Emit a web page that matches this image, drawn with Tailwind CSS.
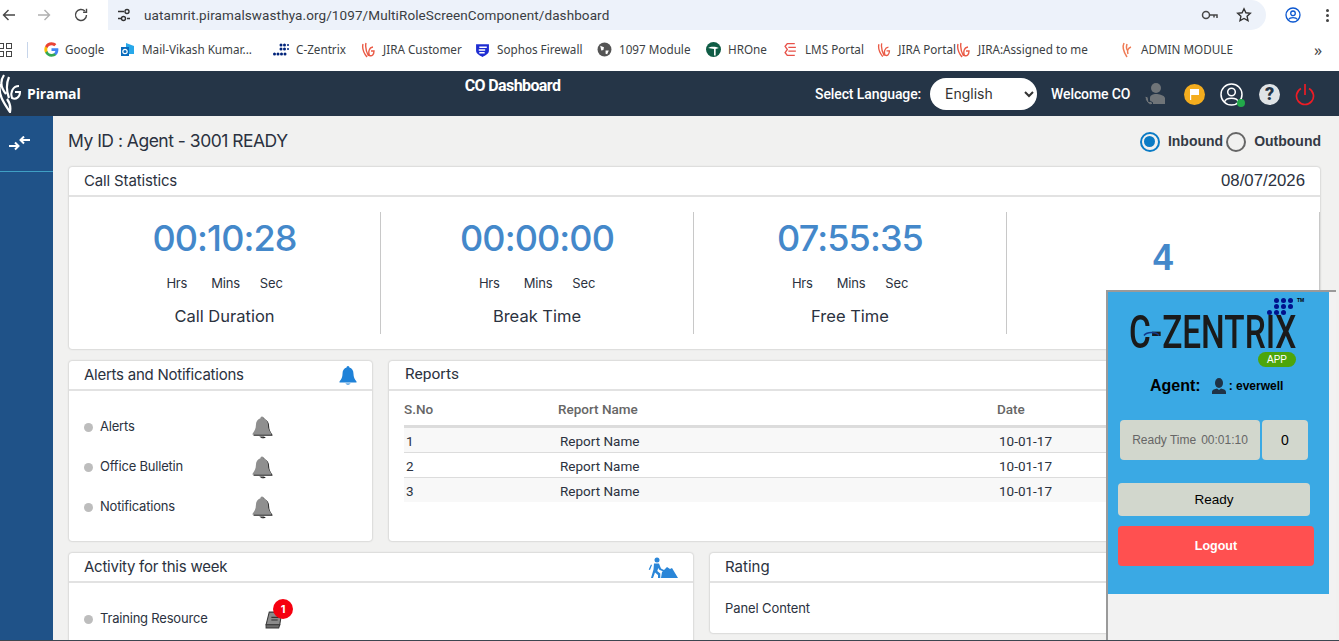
<!DOCTYPE html>
<html lang="en">
<head>
<meta charset="UTF-8" />
<title>CO Dashboard</title>
<script src="https://cdn.jsdelivr.net/npm/@tailwindcss/browser@4"></script>
</head>
<body class="w-[1339px] h-[641px] overflow-hidden relative bg-white font-['Inter',sans-serif] text-[#2b3240]">

  <!-- browser toolbar -->
  <div class="h-[30px] flex items-center bg-white relative">
    <svg class="w-4 h-4 ml-[1px] text-[#474747]" viewBox="0 0 16 16" fill="none" stroke="currentColor" stroke-width="1.4"><path d="M14 8H2.5M7.5 3 2.5 8l5 5"/></svg>
    <svg class="w-4 h-4 ml-[19px] text-[#b0b0b0]" viewBox="0 0 16 16" fill="none" stroke="currentColor" stroke-width="1.4"><path d="M2 8h11.500M8.500 3l5 5-5 5"/></svg>
    <svg class="w-4 h-4 ml-[21px] text-[#474747]" viewBox="0 0 16 16" fill="none" stroke="currentColor" stroke-width="1.4"><path d="M13.500 8a5.500 5.500 0 1 1-1.600-3.900"/><path d="M13.500 1.800v3.400h-3.400" /></svg>
    <div class="ml-[19px] w-[1158px] h-[30px] bg-[#edf2fa] rounded-r-full rounded-bl-[15px] flex items-center pr-[14px]">
      <svg class="w-4 h-4 ml-[8px] text-[#333]" viewBox="0 0 16 16" fill="none" stroke="currentColor" stroke-width="1.400"><path d="M2 4.500h6M2 11.500h3M11 11.500h3"/><circle cx="11" cy="4.500" r="2"/><circle cx="7.500" cy="11.500" r="2"/></svg>
      <span class="ml-[12px] text-[13.500px] font-['Roboto',sans-serif] text-[#3a3d42] tracking-[0.1px] flex-1">uatamrit.piramalswasthya.org/1097/MultiRoleScreenComponent/dashboard</span>
      <svg class="w-[18px] h-[12px] text-[#474747] mr-[17px]" viewBox="0 0 18 12" fill="none" stroke="currentColor" stroke-width="1.500"><circle cx="5" cy="6" r="3.500"/><path d="M8.500 6H16v3M13 6v2.500"/></svg>
      <svg class="w-[16px] h-[16px] text-[#333]" viewBox="0 0 16 16" fill="none" stroke="currentColor" stroke-width="1.400"><path d="m8 1.800 1.900 4 4.400.5-3.200 3 .9 4.400L8 11.500l-4 2.200.9-4.400-3.200-3 4.400-.5z"/></svg>
    </div>
    <svg class="w-[16px] h-[16px] ml-[19px] text-[#0b57d0]" viewBox="0 0 16 16" fill="none" stroke="currentColor" stroke-width="1.300"><circle cx="8" cy="8" r="7"/><circle cx="8" cy="6.300" r="2.300"/><path d="M3.500 12.500c1.500-2.500 7.500-2.500 9 0"/></svg>
    <div class="ml-[25px] flex flex-col gap-[2px]"><i class="w-[3px] h-[3px] rounded-full bg-[#444]"></i><i class="w-[3px] h-[3px] rounded-full bg-[#444]"></i><i class="w-[3px] h-[3px] rounded-full bg-[#444]"></i></div>
  </div>

  <!-- bookmarks -->
  <div class="h-[41px] flex items-center bg-white text-[11.700px] font-['Noto_Sans',sans-serif] text-[#3c3f44] whitespace-nowrap pb-[1px]">
    <div class="w-[27px] shrink-0 flex"><div class="grid grid-cols-2 gap-[2px] -ml-[2px] w-[14px]"><i class="h-[6px] border border-[#444]"></i><i class="h-[6px] border border-[#444]"></i><i class="h-[6px] border border-[#444]"></i><i class="h-[6px] border border-[#444]"></i></div></div>
    <div class="w-[1px] h-[16px] bg-[#c7d5ea] mr-[16px]"></div>
    <div class="w-[76px] flex items-center gap-[6px]">
      <svg class="w-[15px] h-[15px]" viewBox="0 0 48 48"><path fill="#4285F4" d="M46 24.500c0-1.600-.1-3.100-.4-4.500H24v9h12.400c-.5 2.800-2.100 5.200-4.500 6.800v5.700h7.300C43.500 37.500 46 31.500 46 24.500z"/><path fill="#34A853" d="M24 47c6.200 0 11.400-2 15.200-5.500l-7.300-5.700c-2 1.400-4.700 2.200-7.900 2.200-6 0-11.100-4-12.900-9.500H3.500v5.900C7.300 41.900 15 47 24 47z"/><path fill="#FBBC05" d="M11.100 28.500c-.5-1.400-.7-2.900-.7-4.500s.3-3.100.7-4.500v-5.900H3.500C2 16.700 1 20.200 1 24s1 7.300 2.500 10.400z"/><path fill="#EA4335" d="M24 10c3.400 0 6.400 1.200 8.800 3.400l6.500-6.500C35.400 3.300 30.200 1 24 1 15 1 7.300 6.100 3.500 13.600l7.600 5.900C12.900 14 18 10 24 10z"/></svg>
      <span>Google</span>
    </div>
    <div class="w-[153px] flex items-center gap-[7px]">
      <svg class="w-[15px] h-[15px]" viewBox="0 0 15 15"><path fill="#28a8ea" d="M6 1l8 3v8H6z"/><path fill="#0a6cbd" d="M1 5h8v9H1z"/><circle cx="5" cy="9.500" r="2.200" fill="none" stroke="#fff" stroke-width="1.200"/></svg>
      <span>Mail-Vikash Kumar...</span>
    </div>
    <div class="w-[88px] flex items-center gap-[7px]">
      <svg class="w-[16px] h-[14px]" viewBox="0 0 16 14" fill="#00237a"><circle cx="8" cy="2" r="1.500"/><circle cx="11.500" cy="2" r="1.500"/><circle cx="15" cy="2" r="1"/><circle cx="8" cy="6" r="1.500"/><circle cx="11.500" cy="6" r="1.500"/><circle cx="15" cy="6" r="1"/><circle cx="1.500" cy="11" r="1.500"/><circle cx="5" cy="11" r="1.500"/><circle cx="8.500" cy="11" r="1.500"/><circle cx="12" cy="11" r="1.500"/></svg>
      <span>C-Zentrix</span>
    </div>
    <div class="w-[114px] flex items-center gap-[7px]">
      <svg class="w-[15px] h-[16px] text-[#ea5a45]" viewBox="0 0 15 16" fill="none" stroke="currentColor" stroke-width="1.400"><path d="M2 2c-1 4 0 8 4 13M5 1C4 5 5 9 7.500 14M12 5c-4 .5-5 5-3.500 8.500 2.500 1 4.500-1 4.500-4.500H10"/></svg>
      <span>JIRA Customer</span>
    </div>
    <div class="w-[122px] flex items-center gap-[7px]">
      <svg class="w-[15px] h-[15px]" viewBox="0 0 14 14"><path fill="#1e2dd2" d="M1 2h12v6c0 3-3 4.500-6 6-3-1.500-6-3-6-6z"/><path stroke="#fff" stroke-width="1.400" d="M4 5h7M3.500 7.500h6M4 10h5"/></svg>
      <span>Sophos Firewall</span>
    </div>
    <div class="w-[109px] flex items-center gap-[7px]">
      <svg class="w-[15px] h-[15px]" viewBox="0 0 14 14"><circle cx="7" cy="7" r="6.500" fill="#555"/><path fill="#fff" d="M3 3.500 6.500 5 6 7.500 4 8zM8 8h3l-1.500 3.500L8 11z"/></svg>
      <span>1097 Module</span>
    </div>
    <div class="w-[77px] flex items-center gap-[7px]">
      <svg class="w-[15px] h-[15px]" viewBox="0 0 14 14"><circle cx="7" cy="7" r="7" fill="#0f5c45"/><path fill="#fff" d="M2 5.500c2-1.500 7-1.500 10 0l-3 1v6H7.500V6.500z"/></svg>
      <span>HROne</span>
    </div>
    <div class="w-[94px] flex items-center gap-[7px]">
      <svg class="w-[15px] h-[15px] text-[#e8524a]" viewBox="0 0 14 14" fill="none" stroke="currentColor" stroke-width="1.300"><path d="M11 1.500H4L2 4l2 3-2 3 2 2.500h7M5 5h7M5 8.500h7"/></svg>
      <span>LMS Portal</span>
    </div>
    <div class="w-[79px] flex items-center gap-[7px]">
      <svg class="w-[15px] h-[16px] text-[#ea5a45]" viewBox="0 0 15 16" fill="none" stroke="currentColor" stroke-width="1.400"><path d="M2 2c-1 4 0 8 4 13M5 1C4 5 5 9 7.500 14M12 5c-4 .5-5 5-3.500 8.500 2.500 1 4.500-1 4.500-4.500H10"/></svg>
      <span>JIRA Portal</span>
    </div>
    <div class="w-[163px] flex items-center gap-[7px]">
      <svg class="w-[15px] h-[16px] text-[#ea5a45]" viewBox="0 0 15 16" fill="none" stroke="currentColor" stroke-width="1.400"><path d="M2 2c-1 4 0 8 4 13M5 1C4 5 5 9 7.500 14M12 5c-4 .5-5 5-3.500 8.500 2.500 1 4.500-1 4.500-4.500H10"/></svg>
      <span>JIRA:Assigned to me</span>
    </div>
    <div class="w-[195px] flex items-center gap-[7px]">
      <svg class="w-[15px] h-[16px] text-[#ef7b55]" viewBox="0 0 15 16" fill="none" stroke="currentColor" stroke-width="1.500"><path d="M5 1c-2 4-1 8 3 14M8 2c-1 3 0 6 1 7M12 5C9 6 8 9 9 12"/></svg>
      <span>ADMIN MODULE</span>
    </div>
    <span class="text-[16px] text-[#444] leading-none">»</span>
  </div>

  <!-- app header -->
  <header class="h-[45px] bg-[#253547] text-white flex font-['Roboto',sans-serif] relative">
    <div class="w-[390px] flex items-center">
      <svg class="w-[24px] h-[39px] -ml-[3px]" viewBox="0 0 24 39" fill="none" stroke="#fff" stroke-width="2.200"><path d="M7 1C3 7 4 14 9 20M12 3C9 10 9 16 12 24M3 10C1 20 6 28 13 38c1-5 0-9-3-13"/><path d="M22 12c-6 0-9 6-7 12 4 2 8-1 8-6h-5" stroke-width="2"/></svg>
      <span class="ml-[6px] text-[14px] font-bold font-['Open_Sans',sans-serif] tracking-[-0.1px]">Piramal</span>
    </div>
    <div class="w-[245px] text-center pt-[5px] text-[16px] font-bold tracking-[-0.6px] leading-[20px]">CO Dashboard</div>
    <div class="ml-[180px] flex items-center pt-[1px]">
      <span class="w-[115px] text-[14px] font-medium whitespace-nowrap tracking-[-0.1px]">Select Language:</span>
      <select class="w-[107px] h-[32px] -mt-[1px] bg-white text-[#333] text-[14px] rounded-full pl-[11px] font-['Inter',sans-serif]"><option>English</option></select>
      <span class="ml-[14px] w-[92px] text-[14px] font-medium whitespace-nowrap tracking-[-0.1px]">Welcome CO</span>
      <svg class="w-[24px] h-[24px]" viewBox="0 0 24 24" fill="#6f7478"><circle cx="13" cy="6" r="5"/><path d="M7 22v-6c0-3 3-4 6-4s8 1 9 4v6z"/><path d="M2 14c0 5 3 8 6 9l2-2-3-2-1 1-1-5z" stroke="#253547"/></svg>
      <span class="ml-[17px] w-[21px] h-[21px] rounded-full bg-[#f4ad1e] flex items-center justify-center"><svg class="w-[9px] h-[11px]" viewBox="0 0 9 11" fill="#fff"><path d="M0 0h9v6H1.200v5H0z"/></svg></span>
      <span class="relative ml-[15px] w-[23px] h-[23px]">
        <svg class="w-[23px] h-[23px]" viewBox="0 0 23 23" fill="none" stroke="#fff" stroke-width="1.500"><circle cx="11.500" cy="11.500" r="10.500"/><circle cx="11.500" cy="9" r="3.800"/><path d="M4.500 19c1.500-5 12.500-5 14 0"/></svg>
        <i class="absolute right-[-2px] bottom-[-1px] w-[8px] h-[8px] rounded-full bg-[#22a94a]"></i>
      </span>
      <span class="ml-[16px] w-[21px] h-[21px] rounded-full bg-[#dfe3e6] text-[#253547] text-[18px] font-black flex items-center justify-center leading-none">?</span>
      <svg class="w-[20px] h-[23px] ml-[15px]" viewBox="0 0 20 23" fill="none" stroke="#ee1c25" stroke-width="1.700"><path d="M10 1v11M6 5.500a8.500 8.500 0 1 0 8 0"/></svg>
    </div>
  </header>

  <div class="flex h-[525px]">
    <!-- sidebar -->
    <aside class="w-[53px] shrink-0 bg-[#1f5288] shadow-[3px_0_6px_rgba(0,0,0,0.2)]">
      <div class="h-[56px] border-b border-[#3f9fc4] flex items-center pl-[9px]">
        <svg class="w-[21px] h-[15px]" viewBox="0 0 21 15" fill="none" stroke="#fff" stroke-width="2"><path d="M0 10h9M6 6.500l3.500 3.500L6 13.500M21 4h-9M15 .5 11.500 4 15 7.500"/></svg>
      </div>
    </aside>

    <!-- main -->
    <main class="flex-1 bg-[#f1f1f0] pl-[16px] pr-[19px] overflow-hidden">
      <div class="h-[51px] flex items-center">
        <span class="-ml-[1px] text-[17.500px] tracking-[-0.5px]">My ID : Agent - 3001 READY</span>
        <div class="ml-auto -mr-[1px] flex items-center text-[14px] font-bold text-[#333a45] font-['Liberation_Sans',sans-serif]">
          <span class="w-[20px] h-[20px] rounded-full border-2 border-[#0a7bc5] flex items-center justify-center"><i class="w-[11px] h-[11px] rounded-full bg-[#0a7bc5]"></i></span>
          <span class="ml-[8px]">Inbound</span>
          <span class="ml-[3px] w-[20px] h-[20px] rounded-full border-2 border-[#666]"></span>
          <span class="ml-[8px]">Outbound</span>
        </div>
      </div>

      <!-- call statistics -->
      <section class="h-[182px] bg-white rounded-[3px] shadow-[0_0_2px_rgba(0,0,0,0.3)]">
        <div class="h-[30px] border-b-2 border-[#e2e2e2] flex items-center justify-between pl-[15px] pr-[15px] text-[15px] tracking-[-0.15px]">
          <span>Call Statistics</span>
          <span class="font-['Liberation_Sans',sans-serif] text-[16.800px] tracking-normal">08/07/2026</span>
        </div>
        <div class="grid grid-cols-[312px_313px_313px_313px] pt-[15px]">
          <div class="h-[122px] border-r border-[#c8c8c8] text-center">
            <div class="text-[36px] leading-[52px] font-medium text-[#4488ca] tracking-[-0.9px]">00:10:28</div>
            <div class="mt-[7px] flex justify-center text-[13px] tracking-[-0.2px] leading-[24px]"><span>Hrs</span><span class="ml-[24px]">Mins</span><span class="ml-[20px]">Sec</span></div>
            <div class="mt-[8px] text-[16.500px] leading-[26px]">Call Duration</div>
          </div>
          <div class="h-[122px] border-r border-[#c8c8c8] text-center">
            <div class="text-[36px] leading-[52px] font-medium text-[#4488ca] tracking-[-0.9px]">00:00:00</div>
            <div class="mt-[7px] flex justify-center text-[13px] tracking-[-0.2px] leading-[24px]"><span>Hrs</span><span class="ml-[24px]">Mins</span><span class="ml-[20px]">Sec</span></div>
            <div class="mt-[8px] text-[16.500px] leading-[26px]">Break Time</div>
          </div>
          <div class="h-[122px] border-r border-[#c8c8c8] text-center">
            <div class="text-[36px] leading-[52px] font-medium text-[#4488ca] tracking-[-0.9px]">07:55:35</div>
            <div class="mt-[7px] flex justify-center text-[13px] tracking-[-0.2px] leading-[24px]"><span>Hrs</span><span class="ml-[24px]">Mins</span><span class="ml-[20px]">Sec</span></div>
            <div class="mt-[8px] text-[16.500px] leading-[26px]">Free Time</div>
          </div>
          <div class="h-[122px] border-r border-[#c8c8c8] text-center">
            <div class="pt-[20px] text-[36px] leading-[52px] font-bold text-[#4488ca] font-['Liberation_Sans',sans-serif]">4</div>
          </div>
        </div>
      </section>

      <!-- alerts + reports -->
      <div class="mt-[12px] flex gap-[17px] h-[180px]">
        <section class="w-[303px] bg-white rounded-[3px] shadow-[0_0_2px_rgba(0,0,0,0.3)]">
          <div class="h-[30px] border-b-2 border-[#e2e2e2] flex items-center justify-between pl-[15px] pr-[15px] text-[15px] tracking-[-0.25px]">
            <span>Alerts and Notifications</span>
            <svg class="w-[18px] h-[19px] text-[#1f82d8]" viewBox="0 0 18 19" fill="currentColor"><path d="M9 0c1 0 1.400.8 1.400 1.600C13 2.400 14.500 4.500 14.500 8c0 3 1 5 3 7.500v1H.5v-1c2-2.500 3-4.500 3-7.500 0-3.500 1.500-5.600 4.100-6.400C7.600.8 8 0 9 0zM6.500 17.500h5C11 19 7 19 6.500 17.500z"/></svg>
          </div>
          <div class="pt-[16px] pl-[15px] text-[13px] tracking-[-0.2px]">
            <div class="h-[40px] flex items-center"><i class="w-[9px] h-[9px] rounded-full bg-[#bdbdbd]"></i><span class="ml-[7px] w-[152px]">Alerts</span><svg class="w-[20px] h-[22px] text-[#8f8f8f] drop-shadow-[1px_1px_0_#222]" viewBox="0 0 18 19" fill="currentColor"><path d="M9 0c1 0 1.400.8 1.400 1.600C13 2.400 14.500 4.500 14.500 8c0 3 1 5 3 7.500v1H.5v-1c2-2.500 3-4.500 3-7.500 0-3.500 1.500-5.600 4.100-6.400C7.600.8 8 0 9 0zM6.500 17.500h5C11 19 7 19 6.500 17.500z"/></svg></div>
            <div class="h-[40px] flex items-center"><i class="w-[9px] h-[9px] rounded-full bg-[#bdbdbd]"></i><span class="ml-[7px] w-[152px]">Office Bulletin</span><svg class="w-[20px] h-[22px] text-[#8f8f8f] drop-shadow-[1px_1px_0_#222]" viewBox="0 0 18 19" fill="currentColor"><path d="M9 0c1 0 1.400.8 1.400 1.600C13 2.400 14.500 4.500 14.500 8c0 3 1 5 3 7.500v1H.5v-1c2-2.500 3-4.500 3-7.500 0-3.500 1.500-5.600 4.100-6.400C7.600.8 8 0 9 0zM6.500 17.500h5C11 19 7 19 6.500 17.500z"/></svg></div>
            <div class="h-[40px] flex items-center"><i class="w-[9px] h-[9px] rounded-full bg-[#bdbdbd]"></i><span class="ml-[7px] w-[152px]">Notifications</span><svg class="w-[20px] h-[22px] text-[#8f8f8f] drop-shadow-[1px_1px_0_#222]" viewBox="0 0 18 19" fill="currentColor"><path d="M9 0c1 0 1.400.8 1.400 1.600C13 2.400 14.500 4.500 14.500 8c0 3 1 5 3 7.500v1H.5v-1c2-2.500 3-4.500 3-7.500 0-3.500 1.500-5.600 4.100-6.400C7.600.8 8 0 9 0zM6.500 17.500h5C11 19 7 19 6.500 17.500z"/></svg></div>
          </div>
        </section>

        <section class="flex-1 bg-white rounded-[3px] shadow-[0_0_2px_rgba(0,0,0,0.3)]">
          <div class="h-[30px] border-b-2 border-[#e2e2e2] flex items-center px-[16px] text-[15.500px] font-['Roboto',sans-serif]">Reports</div>
          <div class="mx-[15px] text-[13.500px] font-['Roboto',sans-serif]">
            <div class="h-[37px] pt-[2px] border-b-[3px] border-[#dcdcdc] grid grid-cols-[154px_439px_1fr] items-center text-[#666] font-medium">
              <span>S.No</span><span>Report Name</span><span>Date</span></div>
            <div class="h-[25px] pt-[2px] bg-[#f8f8f8] border-b border-[#dcdcdc] pl-[2px] grid grid-cols-[154px_439px_1fr] items-center"><span>1</span><span>Report Name</span><span>10-01-17</span></div>
            <div class="h-[25px] pt-[2px] border-b border-[#dcdcdc] pl-[2px] grid grid-cols-[154px_439px_1fr] items-center"><span>2</span><span>Report Name</span><span>10-01-17</span></div>
            <div class="h-[24px] pt-[2px] bg-[#f8f8f8] pl-[2px] grid grid-cols-[154px_439px_1fr] items-center"><span>3</span><span>Report Name</span><span>10-01-17</span></div>
          </div>
        </section>
      </div>

      <!-- activity + rating -->
      <div class="mt-[12px] flex gap-[17px] items-start">
        <section class="w-[624px] h-[100px] bg-white rounded-t-[3px] shadow-[0_0_2px_rgba(0,0,0,0.3)]">
          <div class="h-[30px] border-b-2 border-[#e2e2e2] flex items-center justify-between pl-[15px] pr-[15px] text-[15px] tracking-[-0.25px]">
            <span>Activity for this week</span>
            <svg class="w-[30px] h-[21px] text-[#2a86d8]" viewBox="0 0 30 21" fill="currentColor"><circle cx="9" cy="3" r="2.500"/><path d="M6 6.500h5l2 5 3 1.500-.7 1.500-4-1.700-1-1.800-1 3 3 2.500V21H10v-3l-3-2.500-2 5.500H3l2.500-8.500zM4 8 2 13l-1.300-.5L3 7.500zM14 15l5-5 3 2 2-1 6 10H13z"/></svg>
          </div>
          <div class="pt-[25px] pl-[15px] text-[13px] tracking-[-0.2px] flex items-center">
            <i class="w-[9px] h-[9px] rounded-full bg-[#bdbdbd]"></i><span class="ml-[7px] w-[164px]">Training Resource</span>
            <span class="relative">
              <svg class="w-[21px] h-[19px] mt-[3px]" viewBox="0 0 20 18"><path fill="#8b8b8b" stroke="#3a3a3a" d="M5 1h12l-2 12H2z"/><path fill="#6c6c6c" stroke="#3a3a3a" d="M2 13h13l-1 3H2z"/><path stroke="#333" d="M7 6h7M7 8.500h6"/></svg>
              <span class="absolute left-[9px] -top-[9px] w-[20px] h-[20px] rounded-full bg-[#f5000f] text-white text-[11px] font-bold flex items-center justify-center">1</span>
            </span>
          </div>
        </section>
        <section class="flex-1 h-[80px] bg-white rounded-[3px] shadow-[0_0_2px_rgba(0,0,0,0.3)]">
          <div class="h-[30px] border-b-2 border-[#e2e2e2] flex items-center px-[15px] text-[15px]">Rating</div>
          <div class="pt-[16px] pl-[15px] text-[13px] tracking-[-0.1px]">Panel Content</div>
        </section>
      </div>
    </main>
  </div>

  <!-- C-Zentrix softphone window, floats over the page -->
  <div class="absolute left-[1106px] top-[290px] w-[230px] h-[350px] bg-[#f2f2f2] border-l-2 border-t-2 border-[#9a9a9a] font-['Liberation_Sans',sans-serif] text-black">
    <div class="w-[221px] h-[302px] bg-[#3aa9e4] relative">
      <div class="absolute left-[21px] top-[22px] h-[36px] text-[#1a1a1a] text-[47px] leading-[36px] font-medium font-['Roboto',sans-serif] origin-left scale-x-[0.71] whitespace-nowrap">C-ZENTRIX</div>
      <svg class="absolute left-[35px] top-[39px] w-[17px] h-[5px]" viewBox="0 0 17 5" fill="none" stroke="#123a8c" stroke-width="1.500"><path d="M1 4.500c3-4 12-4 15 0"/></svg>
      <div class="absolute left-[159px] top-[6px] grid grid-cols-4 gap-x-[2px] gap-y-[1px]">
        <i class="w-[5px] h-[5px]"></i><i class="w-[5px] h-[5px] rounded-full bg-[#00128c]"></i><i class="w-[5px] h-[5px] rounded-full bg-[#00128c]"></i><i class="w-[5px] h-[5px] rounded-full bg-[#00128c]"></i>
        <i class="w-[5px] h-[5px]"></i><i class="w-[5px] h-[5px] rounded-full bg-[#00128c]"></i><i class="w-[5px] h-[5px] rounded-full bg-[#00128c]"></i><i class="w-[5px] h-[5px] rounded-full bg-[#00128c]"></i>
        <i class="w-[5px] h-[5px] rounded-full bg-[#00128c]"></i><i class="w-[5px] h-[5px] rounded-full bg-[#00128c]"></i><i class="w-[5px] h-[5px] rounded-full bg-[#00128c]"></i><i class="w-[5px] h-[5px]"></i>
      </div>
      <span class="absolute left-[189px] top-[5px] text-[5px] font-bold leading-[6px]">TM</span>
      <div class="absolute left-[150px] top-[60px] w-[38px] h-[15px] rounded-full bg-[#4da50b] text-white text-[10px] font-medium leading-[15px] text-center">APP</div>

      <div class="absolute left-[42px] top-[84px] flex items-center h-[20px]">
        <b class="text-[16px]">Agent:</b>
        <svg class="ml-[11px] w-[14px] h-[16px] text-[#1f3346]" viewBox="0 0 14 16" fill="currentColor"><ellipse cx="7" cy="5" rx="4" ry="5"/><path d="M0 16v-2c0-2.500 3-3 5-3.500L7 12l2-1.500c2 .5 5 1 5 3.500v2z"/></svg>
        <b class="ml-[3px] text-[12px]">: everwell</b>
      </div>

      <div class="absolute left-[12px] top-[128px] flex gap-[2px]">
        <div class="w-[140px] h-[40px] rounded-[4px] bg-[#d2d7cd] text-[#666] text-[12px] flex items-center justify-center gap-[5px]"><span>Ready Time</span><span>00:01:10</span></div>
        <div class="w-[46px] h-[40px] rounded-[4px] bg-[#d2d7cd] text-[14px] flex items-center justify-center">0</div>
      </div>
      <div class="absolute left-[10px] top-[191px] w-[192px] h-[33px] pt-[1px] rounded-[4px] bg-[#d2d7cd] text-[13.500px] flex items-center justify-center">Ready</div>
      <div class="absolute left-[10px] top-[234px] w-[196px] h-[40px] rounded-[4px] bg-[#ff5050] text-white text-[12.500px] font-bold flex items-center justify-center">Logout</div>
    </div>
  </div>

  <div class="absolute left-0 bottom-0 w-full h-[1px] bg-[#3c4650]"></div>
</body>
</html>
